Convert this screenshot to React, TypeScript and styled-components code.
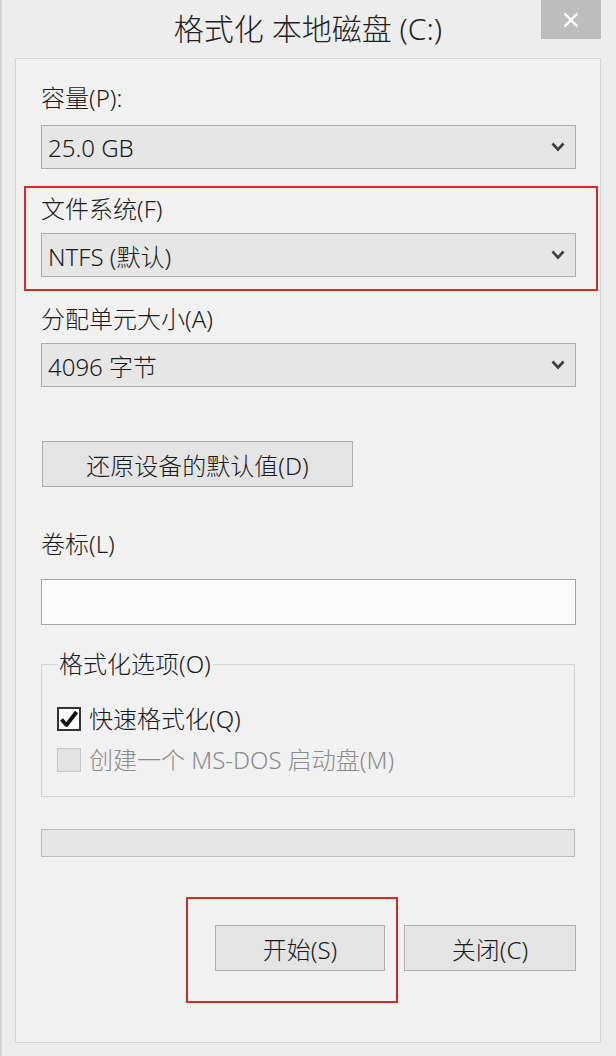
import * as React from 'react';
import styled, { createGlobalStyle } from 'styled-components';

const GlobalStyle = createGlobalStyle`
  html, body {
    margin: 0;
    padding: 0;
  }
  body {
    background: #ededee;
    font-family: "Noto Sans", "Noto Sans CJK SC", sans-serif;
    font-weight: 300;
    color: #1b1b1b;
  }
  * {
    box-sizing: border-box;
  }
`;

function Chevron() {
  return (
    <svg width="14" height="10" viewBox="0 0 14 10">
      <polyline points="1.5,1.5 7,7.5 12.5,1.5" fill="none" stroke="#3e3e3e" strokeWidth="2.6" />
    </svg>
  );
}

function CheckMark() {
  return (
    <svg width="20" height="20" viewBox="0 0 20 20">
      <path d="M2.5 10.5 L7.5 16 L17.5 3" fill="none" stroke="#0d0d0d" strokeWidth="3.8" strokeLinejoin="round" />
    </svg>
  );
}

interface DropDownProps {
  value: string;
  mt: number;
}

function DropDown(props: DropDownProps) {
  return (
    <Select $mt={props.mt}>
      <span>{props.value}</span>
      <Chevron />
    </Select>
  );
}

export default function App() {
  return (
    <React.Fragment>
      <GlobalStyle />
      <Window>
        <TitleBar>
          <Title>格式化 本地磁盘 (C:)</Title>
          <CloseButton>
            <svg width="16" height="16" viewBox="0 0 16 16">
              <path d="M1.5 1.5 L14.5 14.5 M14.5 1.5 L1.5 14.5" stroke="#fff" strokeWidth="2.4" />
            </svg>
          </CloseButton>
        </TitleBar>

        <Panel>
          <Label $mt={0}>容量(P):</Label>
          <DropDown value="25.0 GB" mt={11} />

          <Highlight>
            <Label $mt={0}>文件系统(F)</Label>
            <DropDown value="NTFS (默认)" mt={8} />
          </Highlight>

          <Label $mt={12}>分配单元大小(A)</Label>
          <DropDown value="4096 字节" mt={8} />

          <ResetButton>还原设备的默认值(D)</ResetButton>

          <Label $mt={41}>卷标(L)</Label>
          <TextInput />

          <GroupBox>
            <Legend>格式化选项(O)</Legend>
            <CheckRow $mt={0}>
              <CheckBox $disabled={false}>
                <CheckMark />
              </CheckBox>
              <span>快速格式化(Q)</span>
            </CheckRow>
            <CheckRow $mt={17} $disabled>
              <CheckBox $disabled />
              <span>创建一个 MS-DOS 启动盘(M)</span>
            </CheckRow>
          </GroupBox>

          <Progress />

          <ButtonRow>
            <HighlightButton>
              <DialogButton $width={170} $mt={0}>开始(S)</DialogButton>
            </HighlightButton>
            <DialogButton $width={172} $mt={28}>关闭(C)</DialogButton>
          </ButtonRow>
        </Panel>
      </Window>
    </React.Fragment>
  );
}

const Window = styled.div`
  width: 616px;
  height: 1056px;
  display: flex;
  flex-direction: column;
  background: #ededee;
  border-left: 2px solid #d3d3d5;
`;

const TitleBar = styled.div`
  display: grid;
  grid-template-columns: 60px 1fr 60px;
  align-items: start;
  height: 58px;
  padding: 0 15px 0 13px;
`;

const Title = styled.div`
  grid-column: 2;
  text-align: center;
  font-size: 30px;
  line-height: 58px;
  color: #1f1f1f;
  white-space: nowrap;
`;

const CloseButton = styled.div`
  grid-column: 3;
  width: 60px;
  height: 39px;
  background: #bdbdbe;
  display: flex;
  align-items: center;
  justify-content: center;
`;

const Panel = styled.div`
  margin: 0 15px 0 13px;
  height: 985px;
  border: 1px solid #d6d6d8;
  background: #f1f1f2;
  padding: 23px 24px 0 25px;
  display: flex;
  flex-direction: column;
`;

const Label = styled.div<{ $mt: number }>`
  margin-top: ${(p) => p.$mt}px;
  font-size: 24px;
  line-height: 32px;
  height: 32px;
  color: #1b1b1b;
  white-space: nowrap;
`;

const Select = styled.div<{ $mt: number }>`
  margin-top: ${(p) => p.$mt}px;
  height: 44px;
  display: flex;
  align-items: center;
  justify-content: space-between;
  padding: 0 10px 0 6px;
  background: #e6e6e7;
  border: 1px solid #acacac;
  font-size: 24px;
  color: #1b1b1b;
`;

const Highlight = styled.div`
  margin: 17px -22px 0 -17px;
  border: 2px solid #d52a24;
  padding: 5px 20px 12px 15px;
  display: flex;
  flex-direction: column;
`;

const ResetButton = styled.div`
  margin-top: 54px;
  margin-left: 1px;
  align-self: flex-start;
  width: 311px;
  height: 46px;
  display: flex;
  align-items: center;
  justify-content: center;
  background: #e4e4e5;
  border: 1px solid #adadad;
  font-size: 24px;
  color: #1b1b1b;
`;

const TextInput = styled.div`
  margin-top: 19px;
  height: 46px;
  background: #fcfcfd;
  border: 1px solid #a3a3a3;
`;

const GroupBox = styled.fieldset`
  margin: 23px 1px 0 0;
  min-width: 0;
  padding: 27px 15px 24px 15px;
  border: 1px solid #d4d4d6;
`;

const Legend = styled.legend`
  padding: 0 2px;
  font-size: 24px;
  line-height: 32px;
  color: #1b1b1b;
`;

const CheckRow = styled.div<{ $mt: number; $disabled?: boolean }>`
  margin-top: ${(p) => p.$mt}px;
  height: 24px;
  display: flex;
  align-items: center;
  gap: 8px;
  font-size: 24px;
  line-height: 24px;
  white-space: nowrap;
  color: ${(p) => (p.$disabled ? '#8c8c8c' : '#1b1b1b')};
`;

const CheckBox = styled.div<{ $disabled: boolean }>`
  width: 24px;
  height: 24px;
  flex-shrink: 0;
  display: flex;
  align-items: center;
  justify-content: center;
  background: ${(p) => (p.$disabled ? '#e3e3e4' : '#fdfdfd')};
  border: ${(p) => (p.$disabled ? '1px solid #c6c6c8' : '2px solid #333')};
`;

const Progress = styled.div`
  margin: 32px 1px 0 0;
  height: 28px;
  background: #e5e5e6;
  border: 1px solid #bbbbbb;
`;

const ButtonRow = styled.div`
  margin-top: 40px;
  display: flex;
  justify-content: flex-end;
  align-items: flex-start;
  gap: 6px;
`;

const HighlightButton = styled.div`
  border: 2px solid #d52a24;
  padding: 26px 11px 30px 27px;
`;

const DialogButton = styled.div<{ $width: number; $mt: number }>`
  margin-top: ${(p) => p.$mt}px;
  width: ${(p) => p.$width}px;
  height: 46px;
  display: flex;
  align-items: center;
  justify-content: center;
  background: #e4e4e5;
  border: 1px solid #adadad;
  font-size: 24px;
  color: #1b1b1b;
`;
